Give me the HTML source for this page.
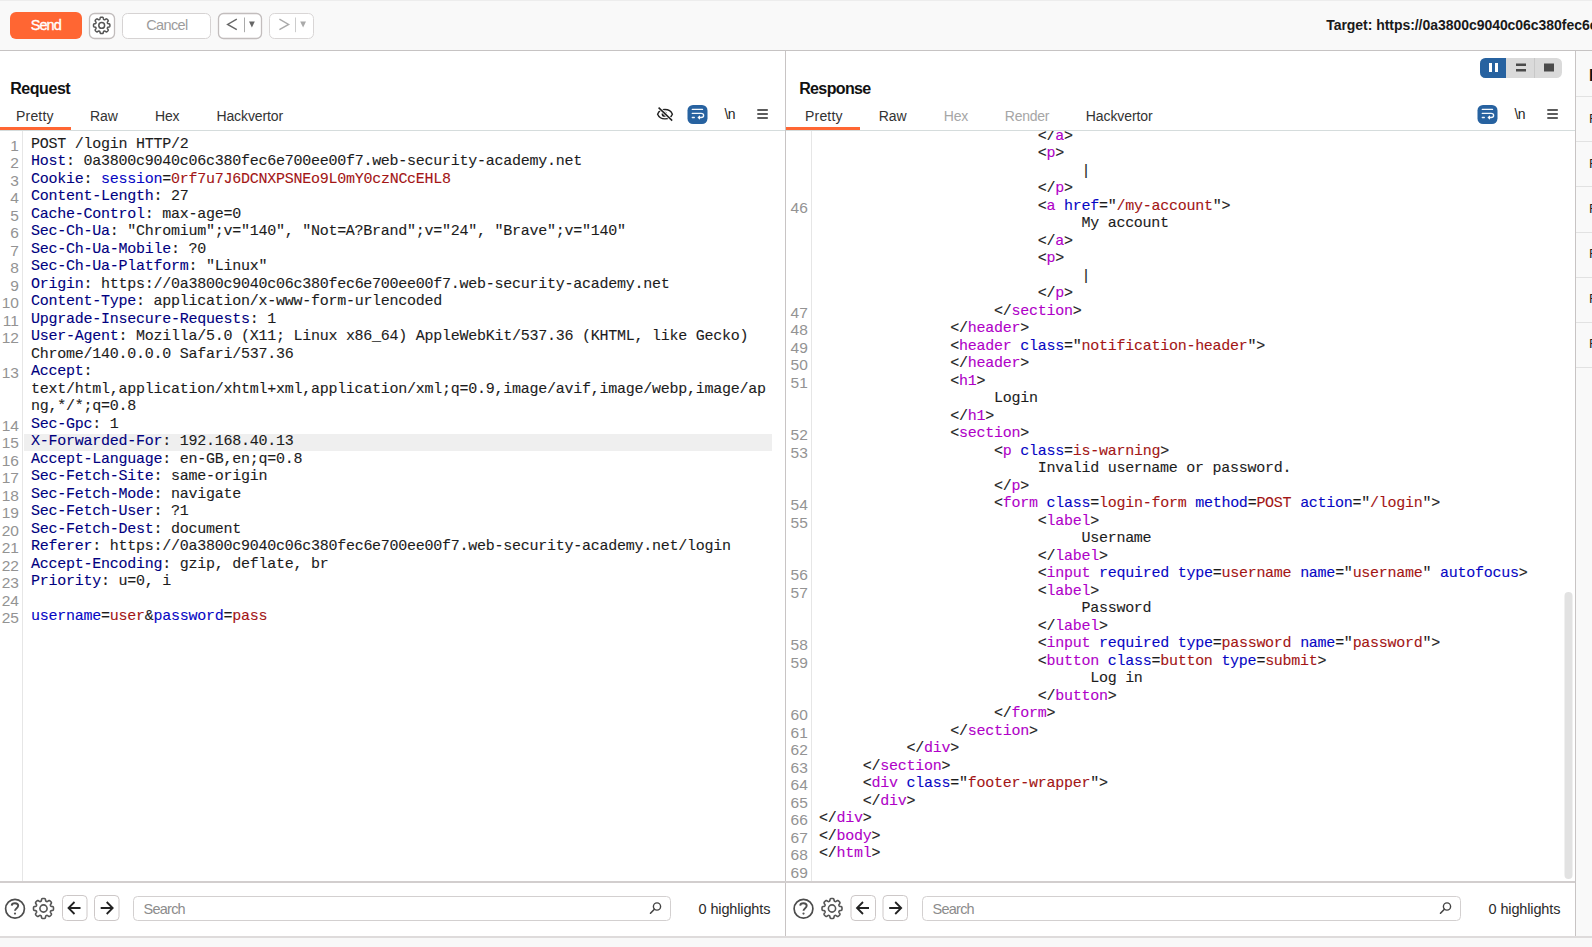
<!DOCTYPE html>
<html><head><meta charset="utf-8">
<style>
*{box-sizing:border-box;margin:0;padding:0}
html,body{width:1592px;height:947px;overflow:hidden;background:#fff;font-family:"Liberation Sans",sans-serif;color:#1a1a1a;position:relative}
.a{position:absolute}
#tb{left:0;top:0;width:1592px;height:50px;background:#f9f9f9;border-top:1px solid #ededed}
#tbline{left:0;top:50px;width:1592px;height:1px;background:#c6c3c3}
.btn{position:absolute;border:1px solid #cdc8c8;border-radius:5px;background:#fff}
#send{position:absolute;left:10px;top:12px;width:72px;height:27px;background:#ff6633;border-radius:6px;color:#fff;font-size:15px;text-align:center;line-height:27px}
.hdr{position:absolute;font-weight:bold;font-size:16px;color:#111;white-space:nowrap}
.tab{position:absolute;font-size:13.5px;color:#3a3a3a;white-space:nowrap}
.tab.dis{color:#a8a8a8}
.ul{position:absolute;height:3px;background:#ff6633}
.hl{position:absolute;height:1px;background:#d5dcdc}
.vl{position:absolute;width:1px}
.clip{position:absolute;left:0;top:0;width:1592px;height:947px}
.code{position:absolute;font-family:"Liberation Mono",monospace;font-size:15px;letter-spacing:-0.255px;line-height:17.5px;white-space:pre;color:#1c1c1c;-webkit-text-stroke:0.1px currentColor}
.ln{position:absolute;font-size:13px;color:#8a8a8a;text-align:right;line-height:17.5px}
.nl{position:absolute;font-size:14px;color:#222;letter-spacing:-0.5px}
.ph{position:absolute;font-size:13.5px;color:#8e8e8e}
.hi{position:absolute;font-size:13.5px;color:#2a2a2a;white-space:nowrap}
.n{color:#000080}.b{color:#0606c4}.r{color:#a31515}.t{color:#b000c8}
</style></head><body>
<div id="tb" class="a"></div>
<div id="tbline" class="a"></div>

<!-- request pane -->
<div class="hl" style="left:0;top:130px;width:785px"></div>
<div class="ul" style="left:0;top:127px;width:71px"></div>

<div class="clip" style="clip-path:inset(131px 807px 66px 0)">
<div class="a" style="left:24px;top:434px;width:748px;height:17px;background:#efefef"></div>
<div class="vl" style="left:22px;top:131px;height:750px;background:#e6e6e6"></div>
<svg class="a" style="left:0;top:0" width="1592" height="947"><g font-family="Liberation Sans, sans-serif" font-size="15.5" fill="#939393" text-anchor="end"><text x="18.9" y="150.60">1</text><text x="18.9" y="168.10">2</text><text x="18.9" y="185.60">3</text><text x="18.9" y="203.10">4</text><text x="18.9" y="220.60">5</text><text x="18.9" y="238.10">6</text><text x="18.9" y="255.60">7</text><text x="18.9" y="273.10">8</text><text x="18.9" y="290.60">9</text><text x="18.9" y="308.10">10</text><text x="18.9" y="325.60">11</text><text x="18.9" y="343.10">12</text><text x="18.9" y="378.10">13</text><text x="18.9" y="430.60">14</text><text x="18.9" y="448.10">15</text><text x="18.9" y="465.60">16</text><text x="18.9" y="483.10">17</text><text x="18.9" y="500.60">18</text><text x="18.9" y="518.10">19</text><text x="18.9" y="535.60">20</text><text x="18.9" y="553.10">21</text><text x="18.9" y="570.60">22</text><text x="18.9" y="588.10">23</text><text x="18.9" y="605.60">24</text><text x="18.9" y="623.10">25</text></g></svg>
<div class="code" style="left:31px;top:135.7px;width:750px">POST /login HTTP/2
<span class="n">Host</span>: 0a3800c9040c06c380fec6e700ee00f7.web-security-academy.net
<span class="n">Cookie</span>: <span class="b">session</span>=<span class="r">0rf7u7J6DCNXPSNEo9L0mY0czNCcEHL8</span>
<span class="n">Content-Length</span>: 27
<span class="n">Cache-Control</span>: max-age=0
<span class="n">Sec-Ch-Ua</span>: "Chromium";v="140", "Not=A?Brand";v="24", "Brave";v="140"
<span class="n">Sec-Ch-Ua-Mobile</span>: ?0
<span class="n">Sec-Ch-Ua-Platform</span>: "Linux"
<span class="n">Origin</span>: https://0a3800c9040c06c380fec6e700ee00f7.web-security-academy.net
<span class="n">Content-Type</span>: application/x-www-form-urlencoded
<span class="n">Upgrade-Insecure-Requests</span>: 1
<span class="n">User-Agent</span>: Mozilla/5.0 (X11; Linux x86_64) AppleWebKit/537.36 (KHTML, like Gecko)
Chrome/140.0.0.0 Safari/537.36
<span class="n">Accept</span>:
text/html,application/xhtml+xml,application/xml;q=0.9,image/avif,image/webp,image/ap
ng,*/*;q=0.8
<span class="n">Sec-Gpc</span>: 1
<span class="n">X-Forwarded-For</span>: 192.168.40.13
<span class="n">Accept-Language</span>: en-GB,en;q=0.8
<span class="n">Sec-Fetch-Site</span>: same-origin
<span class="n">Sec-Fetch-Mode</span>: navigate
<span class="n">Sec-Fetch-User</span>: ?1
<span class="n">Sec-Fetch-Dest</span>: document
<span class="n">Referer</span>: https://0a3800c9040c06c380fec6e700ee00f7.web-security-academy.net/login
<span class="n">Accept-Encoding</span>: gzip, deflate, br
<span class="n">Priority</span>: u=0, i

<span class="b">username</span>=<span class="r">user</span>&amp;<span class="b">password</span>=<span class="r">pass</span></div>
</div>

<!-- divider -->
<div class="vl" style="left:785px;top:51px;height:886px;background:#c8c4c4"></div>

<!-- response pane -->
<div class="hl" style="left:786px;top:130px;width:789px"></div>
<div class="ul" style="left:786px;top:127px;width:74px"></div>

<div class="clip" style="clip-path:inset(131px 17px 66px 786px)">
<div class="vl" style="left:811px;top:131px;height:750px;background:#e6e6e6"></div>
<svg class="a" style="left:0;top:0" width="1592" height="947"><g font-family="Liberation Sans, sans-serif" font-size="15.5" fill="#939393" text-anchor="end"><text x="807.8" y="212.90">46</text><text x="807.8" y="317.90">47</text><text x="807.8" y="335.40">48</text><text x="807.8" y="352.90">49</text><text x="807.8" y="370.40">50</text><text x="807.8" y="387.90">51</text><text x="807.8" y="440.40">52</text><text x="807.8" y="457.90">53</text><text x="807.8" y="510.40">54</text><text x="807.8" y="527.90">55</text><text x="807.8" y="580.40">56</text><text x="807.8" y="597.90">57</text><text x="807.8" y="650.40">58</text><text x="807.8" y="667.90">59</text><text x="807.8" y="720.40">60</text><text x="807.8" y="737.90">61</text><text x="807.8" y="755.40">62</text><text x="807.8" y="772.90">63</text><text x="807.8" y="790.40">64</text><text x="807.8" y="807.90">65</text><text x="807.8" y="825.40">66</text><text x="807.8" y="842.90">67</text><text x="807.8" y="860.40">68</text><text x="807.8" y="877.90">69</text></g></svg>
<div class="code" style="left:819px;top:127.9px;width:745px">                         &lt;/<span class="t">a</span>&gt;
                         &lt;<span class="t">p</span>&gt;
                              |
                         &lt;/<span class="t">p</span>&gt;
                         &lt;<span class="t">a</span> <span class="b">href</span>="<span class="r">/my-account</span>"&gt;
                              My account
                         &lt;/<span class="t">a</span>&gt;
                         &lt;<span class="t">p</span>&gt;
                              |
                         &lt;/<span class="t">p</span>&gt;
                    &lt;/<span class="t">section</span>&gt;
               &lt;/<span class="t">header</span>&gt;
               &lt;<span class="t">header</span> <span class="b">class</span>="<span class="r">notification-header</span>"&gt;
               &lt;/<span class="t">header</span>&gt;
               &lt;<span class="t">h1</span>&gt;
                    Login
               &lt;/<span class="t">h1</span>&gt;
               &lt;<span class="t">section</span>&gt;
                    &lt;<span class="t">p</span> <span class="b">class</span>=<span class="r">is-warning</span>&gt;
                         Invalid username or password.
                    &lt;/<span class="t">p</span>&gt;
                    &lt;<span class="t">form</span> <span class="b">class</span>=<span class="r">login-form</span> <span class="b">method</span>=<span class="r">POST</span> <span class="b">action</span>="<span class="r">/login</span>"&gt;
                         &lt;<span class="t">label</span>&gt;
                              Username
                         &lt;/<span class="t">label</span>&gt;
                         &lt;<span class="t">input</span> <span class="b">required</span> <span class="b">type</span>=<span class="r">username</span> <span class="b">name</span>="<span class="r">username</span>" <span class="b">autofocus</span>&gt;
                         &lt;<span class="t">label</span>&gt;
                              Password
                         &lt;/<span class="t">label</span>&gt;
                         &lt;<span class="t">input</span> <span class="b">required</span> <span class="b">type</span>=<span class="r">password</span> <span class="b">name</span>="<span class="r">password</span>"&gt;
                         &lt;<span class="t">button</span> <span class="b">class</span>=<span class="r">button</span> <span class="b">type</span>=<span class="r">submit</span>&gt;
                               Log in
                         &lt;/<span class="t">button</span>&gt;
                    &lt;/<span class="t">form</span>&gt;
               &lt;/<span class="t">section</span>&gt;
          &lt;/<span class="t">div</span>&gt;
     &lt;/<span class="t">section</span>&gt;
     &lt;<span class="t">div</span> <span class="b">class</span>="<span class="r">footer-wrapper</span>"&gt;
     &lt;/<span class="t">div</span>&gt;
&lt;/<span class="t">div</span>&gt;
&lt;/<span class="t">body</span>&gt;
&lt;/<span class="t">html</span>&gt;
</div>
</div>

<div class="vl" style="left:1575px;top:51px;height:886px;background:#c8c4c4"></div>
<div class="a" style="left:1576px;top:51px;width:16px;height:886px;background:#f9f9f9"></div>

<!-- bottom -->
<div class="a" style="left:1576px;top:96px;width:16px;height:1px;background:#e2e2e2"></div>
<div class="a" style="left:1576px;top:141px;width:16px;height:1px;background:#e2e2e2"></div>
<div class="a" style="left:1576px;top:186px;width:16px;height:1px;background:#e2e2e2"></div>
<div class="a" style="left:1576px;top:232px;width:16px;height:1px;background:#e2e2e2"></div>
<div class="a" style="left:1576px;top:277px;width:16px;height:1px;background:#e2e2e2"></div>
<div class="a" style="left:1576px;top:322px;width:16px;height:1px;background:#e2e2e2"></div>
<div class="a" style="left:1576px;top:367px;width:16px;height:1px;background:#e2e2e2"></div>
<div class="a" style="left:1589px;top:67px;font-size:16px;font-weight:bold;color:#111">I</div>
<div class="a" style="left:1589px;top:110.5px;font-size:13.5px;color:#222">R</div>
<div class="a" style="left:1589px;top:155.5px;font-size:13.5px;color:#222">R</div>
<div class="a" style="left:1589px;top:200.5px;font-size:13.5px;color:#222">R</div>
<div class="a" style="left:1589px;top:245.5px;font-size:13.5px;color:#222">R</div>
<div class="a" style="left:1589px;top:290.5px;font-size:13.5px;color:#222">R</div>
<div class="a" style="left:1589px;top:335.5px;font-size:13.5px;color:#222">R</div>
<div class="a" style="left:0;top:881px;width:1575px;height:2px;background:#d2cece"></div>
<div class="a" style="left:0;top:936px;width:1592px;height:2px;background:#dedbdb"></div>
<div class="a" style="left:0;top:938px;width:1592px;height:9px;background:#f8f8f8"></div>
<svg class="a" style="left:0;top:0" width="1592" height="947" viewBox="0 0 1592 947">
<rect x="10" y="12" width="72" height="27" rx="6" fill="#ff6633"/>
<rect x="89.5" y="13.5" width="25" height="25" rx="5" fill="#fff" stroke="#c2bdbd" stroke-width="1.3"/>
<path d="M101.70 17.20L101.91 17.20L102.13 17.21L102.34 17.23L102.55 17.27L102.76 17.32L102.96 17.43L103.14 17.63L103.28 17.98L103.37 18.46L103.44 18.91L103.53 19.21L103.65 19.40L103.78 19.52L103.93 19.60L104.07 19.67L104.23 19.73L104.39 19.77L104.56 19.78L104.78 19.73L105.06 19.58L105.43 19.32L105.83 19.04L106.18 18.89L106.44 18.87L106.66 18.94L106.85 19.04L107.02 19.17L107.18 19.31L107.34 19.45L107.50 19.60L107.65 19.76L107.79 19.92L107.93 20.08L108.06 20.25L108.16 20.44L108.23 20.66L108.21 20.92L108.06 21.27L107.78 21.67L107.52 22.04L107.37 22.32L107.32 22.54L107.33 22.71L107.37 22.87L107.43 23.03L107.50 23.17L107.58 23.32L107.70 23.45L107.89 23.57L108.19 23.66L108.64 23.73L109.12 23.82L109.47 23.96L109.67 24.14L109.78 24.34L109.83 24.55L109.87 24.76L109.89 24.97L109.90 25.19L109.90 25.40L109.90 25.61L109.89 25.83L109.87 26.04L109.83 26.25L109.78 26.46L109.67 26.66L109.47 26.84L109.12 26.98L108.64 27.07L108.19 27.14L107.89 27.23L107.70 27.35L107.58 27.48L107.50 27.63L107.43 27.77L107.37 27.93L107.33 28.09L107.32 28.26L107.37 28.48L107.52 28.76L107.78 29.13L108.06 29.53L108.21 29.88L108.23 30.14L108.16 30.36L108.06 30.55L107.93 30.72L107.79 30.88L107.65 31.04L107.50 31.20L107.34 31.35L107.18 31.49L107.02 31.63L106.85 31.76L106.66 31.86L106.44 31.93L106.18 31.91L105.83 31.76L105.43 31.48L105.06 31.22L104.78 31.07L104.56 31.02L104.39 31.03L104.23 31.07L104.07 31.13L103.93 31.20L103.78 31.28L103.65 31.40L103.53 31.59L103.44 31.89L103.37 32.34L103.28 32.82L103.14 33.17L102.96 33.37L102.76 33.48L102.55 33.53L102.34 33.57L102.13 33.59L101.91 33.60L101.70 33.60L101.49 33.60L101.27 33.59L101.06 33.57L100.85 33.53L100.64 33.48L100.44 33.37L100.26 33.17L100.12 32.82L100.03 32.34L99.96 31.89L99.87 31.59L99.75 31.40L99.62 31.28L99.47 31.20L99.33 31.13L99.17 31.07L99.01 31.03L98.84 31.02L98.62 31.07L98.34 31.22L97.97 31.48L97.57 31.76L97.22 31.91L96.96 31.93L96.74 31.86L96.55 31.76L96.38 31.63L96.22 31.49L96.06 31.35L95.90 31.20L95.75 31.04L95.61 30.88L95.47 30.72L95.34 30.55L95.24 30.36L95.17 30.14L95.19 29.88L95.34 29.53L95.62 29.13L95.88 28.76L96.03 28.48L96.08 28.26L96.07 28.09L96.03 27.93L95.97 27.77L95.90 27.63L95.82 27.48L95.70 27.35L95.51 27.23L95.21 27.14L94.76 27.07L94.28 26.98L93.93 26.84L93.73 26.66L93.62 26.46L93.57 26.25L93.53 26.04L93.51 25.83L93.50 25.61L93.50 25.40L93.50 25.19L93.51 24.97L93.53 24.76L93.57 24.55L93.62 24.34L93.73 24.14L93.93 23.96L94.28 23.82L94.76 23.73L95.21 23.66L95.51 23.57L95.70 23.45L95.82 23.32L95.90 23.17L95.97 23.03L96.03 22.87L96.07 22.71L96.08 22.54L96.03 22.32L95.88 22.04L95.62 21.67L95.34 21.27L95.19 20.92L95.17 20.66L95.24 20.44L95.34 20.25L95.47 20.08L95.61 19.92L95.75 19.76L95.90 19.60L96.06 19.45L96.22 19.31L96.38 19.17L96.55 19.04L96.74 18.94L96.96 18.87L97.22 18.89L97.57 19.04L97.97 19.32L98.34 19.58L98.62 19.73L98.84 19.78L99.01 19.77L99.17 19.73L99.33 19.67L99.47 19.60L99.62 19.52L99.75 19.40L99.87 19.21L99.96 18.91L100.03 18.46L100.12 17.98L100.26 17.63L100.44 17.43L100.64 17.32L100.85 17.27L101.06 17.23L101.27 17.21L101.49 17.20Z" fill="none" stroke="#555" stroke-width="1.5" stroke-linejoin="round"/>
<circle cx="101.7" cy="25.4" r="2.9" fill="none" stroke="#555" stroke-width="1.5"/>
<rect x="122.5" y="13.5" width="88" height="25" rx="5" fill="#fff" stroke="#d6d3d3"/>
<rect x="218.5" y="13.5" width="43" height="25" rx="5" fill="#fff" stroke="#c2bdbd" stroke-width="1.3"/>
<path d="M236.8 19.2L227.6 24.4L236.8 29.6" fill="none" stroke="#666" stroke-width="1.4"/>
<path d="M244.5 17.5V32.2" stroke="#aaa" stroke-width="1"/>
<path d="M249 21.6H254.8L251.9 27.5Z" fill="#666"/>
<rect x="269.5" y="13.5" width="44" height="25" rx="5" fill="#fff" stroke="#d9d6d6"/>
<path d="M279.4 19.2L288.6 24.4L279.4 29.6" fill="none" stroke="#aaa" stroke-width="1.4"/>
<path d="M295.5 17.5V32.2" stroke="#ccc" stroke-width="1"/>
<path d="M300.2 21.6H306L303.1 27.5Z" fill="#aaa"/>
<g fill="none" stroke="#222" stroke-width="1.4"><path d="M657.6 114.2C660.2 108 669.8 108 672.4 114.2C669.8 120.4 660.2 120.4 657.6 114.2Z"/><circle cx="664.3" cy="114.2" r="2.6" fill="#222" stroke="none"/><path d="M658.6 107.6L672.2 120.6" stroke="#fff" stroke-width="3.2"/><path d="M658.6 107.6L672.2 120.6" stroke-width="1.5"/></g>
<rect x="687.5" y="105" width="20" height="19" rx="5.5" fill="#2762a0"/><g stroke="#f4f8fc" stroke-width="1.35" fill="none" stroke-linecap="round"><path d="M692.3 109.4H702.5"/><path d="M692.3 113.4H701.0C704.5 113.4 704.5 117.5 701.0 117.5H698.5"/><path d="M692.3 117.5H694.3"/></g><path d="M700.0 115.2L697.5 117.5L700.0 119.8Z" fill="#fff"/>
<rect x="1477.5" y="105" width="20" height="19" rx="5.5" fill="#2762a0"/><g stroke="#f4f8fc" stroke-width="1.35" fill="none" stroke-linecap="round"><path d="M1482.3 109.4H1492.5"/><path d="M1482.3 113.4H1491.0C1494.5 113.4 1494.5 117.5 1491.0 117.5H1488.5"/><path d="M1482.3 117.5H1484.3"/></g><path d="M1490.0 115.2L1487.5 117.5L1490.0 119.8Z" fill="#fff"/>
<rect x="757.3" y="109" width="10.5" height="2" fill="#5c5c5c"/><rect x="757.3" y="113" width="10.5" height="2" fill="#5c5c5c"/><rect x="757.3" y="117" width="10.5" height="2" fill="#5c5c5c"/>
<rect x="1547.3" y="109" width="10.5" height="2" fill="#5c5c5c"/><rect x="1547.3" y="113" width="10.5" height="2" fill="#5c5c5c"/><rect x="1547.3" y="117" width="10.5" height="2" fill="#5c5c5c"/>
<rect x="1480" y="58" width="82" height="20" rx="5.5" fill="#dadada"/>
<path d="M1485.5 58H1506V78H1485.5A5.5 5.5 0 0 1 1480 72.5V63.5A5.5 5.5 0 0 1 1485.5 58Z" fill="#2762a0"/>
<path d="M1534.5 58V78" stroke="#c8c8c8" stroke-width="1"/>
<rect x="1489" y="63" width="3" height="9" fill="#fff"/><rect x="1495" y="63" width="3" height="9" fill="#fff"/>
<rect x="1516" y="63.5" width="10" height="2.5" fill="#4a4a4a"/><rect x="1516" y="69" width="10" height="2.5" fill="#4a4a4a"/>
<rect x="1544" y="63.5" width="10" height="8" fill="#4a4a4a"/>
<circle cx="15" cy="908.7" r="9.4" fill="none" stroke="#4d4d4d" stroke-width="1.7"/><path d="M11.7 905.6C11.9 902.4 18.2 902.4 18.2 905.8C18.2 908.2 15 908.2 15 910.8" fill="none" stroke="#4d4d4d" stroke-width="1.9"/><circle cx="15" cy="913.6" r="1.1" fill="#555"/><path d="M43.50 898.50L43.76 898.50L44.02 898.52L44.28 898.54L44.54 898.58L44.80 898.65L45.04 898.77L45.26 899.02L45.43 899.44L45.54 900.02L45.63 900.55L45.74 900.92L45.89 901.15L46.05 901.29L46.23 901.39L46.41 901.48L46.60 901.55L46.79 901.60L47.01 901.61L47.27 901.55L47.61 901.37L48.06 901.06L48.54 900.73L48.96 900.55L49.29 900.53L49.55 900.62L49.78 900.75L49.99 900.90L50.19 901.07L50.38 901.25L50.57 901.43L50.75 901.62L50.93 901.81L51.10 902.01L51.25 902.22L51.38 902.45L51.47 902.71L51.45 903.04L51.27 903.46L50.94 903.94L50.63 904.39L50.45 904.73L50.39 904.99L50.40 905.21L50.45 905.40L50.52 905.59L50.61 905.77L50.71 905.95L50.85 906.11L51.08 906.26L51.45 906.37L51.98 906.46L52.56 906.57L52.98 906.74L53.23 906.96L53.35 907.20L53.42 907.46L53.46 907.72L53.48 907.98L53.50 908.24L53.50 908.50L53.50 908.76L53.48 909.02L53.46 909.28L53.42 909.54L53.35 909.80L53.23 910.04L52.98 910.26L52.56 910.43L51.98 910.54L51.45 910.63L51.08 910.74L50.85 910.89L50.71 911.05L50.61 911.23L50.52 911.41L50.45 911.60L50.40 911.79L50.39 912.01L50.45 912.27L50.63 912.61L50.94 913.06L51.27 913.54L51.45 913.96L51.47 914.29L51.38 914.55L51.25 914.78L51.10 914.99L50.93 915.19L50.75 915.38L50.57 915.57L50.38 915.75L50.19 915.93L49.99 916.10L49.78 916.25L49.55 916.38L49.29 916.47L48.96 916.45L48.54 916.27L48.06 915.94L47.61 915.63L47.27 915.45L47.01 915.39L46.79 915.40L46.60 915.45L46.41 915.52L46.23 915.61L46.05 915.71L45.89 915.85L45.74 916.08L45.63 916.45L45.54 916.98L45.43 917.56L45.26 917.98L45.04 918.23L44.80 918.35L44.54 918.42L44.28 918.46L44.02 918.48L43.76 918.50L43.50 918.50L43.24 918.50L42.98 918.48L42.72 918.46L42.46 918.42L42.20 918.35L41.96 918.23L41.74 917.98L41.57 917.56L41.46 916.98L41.37 916.45L41.26 916.08L41.11 915.85L40.95 915.71L40.77 915.61L40.59 915.52L40.40 915.45L40.21 915.40L39.99 915.39L39.73 915.45L39.39 915.63L38.94 915.94L38.46 916.27L38.04 916.45L37.71 916.47L37.45 916.38L37.22 916.25L37.01 916.10L36.81 915.93L36.62 915.75L36.43 915.57L36.25 915.38L36.07 915.19L35.90 914.99L35.75 914.78L35.62 914.55L35.53 914.29L35.55 913.96L35.73 913.54L36.06 913.06L36.37 912.61L36.55 912.27L36.61 912.01L36.60 911.79L36.55 911.60L36.48 911.41L36.39 911.23L36.29 911.05L36.15 910.89L35.92 910.74L35.55 910.63L35.02 910.54L34.44 910.43L34.02 910.26L33.77 910.04L33.65 909.80L33.58 909.54L33.54 909.28L33.52 909.02L33.50 908.76L33.50 908.50L33.50 908.24L33.52 907.98L33.54 907.72L33.58 907.46L33.65 907.20L33.77 906.96L34.02 906.74L34.44 906.57L35.02 906.46L35.55 906.37L35.92 906.26L36.15 906.11L36.29 905.95L36.39 905.77L36.48 905.59L36.55 905.40L36.60 905.21L36.61 904.99L36.55 904.73L36.37 904.39L36.06 903.94L35.73 903.46L35.55 903.04L35.53 902.71L35.62 902.45L35.75 902.22L35.90 902.01L36.07 901.81L36.25 901.62L36.43 901.43L36.62 901.25L36.81 901.07L37.01 900.90L37.22 900.75L37.45 900.62L37.71 900.53L38.04 900.55L38.46 900.73L38.94 901.06L39.39 901.37L39.73 901.55L39.99 901.61L40.21 901.60L40.40 901.55L40.59 901.48L40.77 901.39L40.95 901.29L41.11 901.15L41.26 900.92L41.37 900.55L41.46 900.02L41.57 899.44L41.74 899.02L41.96 898.77L42.20 898.65L42.46 898.58L42.72 898.54L42.98 898.52L43.24 898.50Z" fill="none" stroke="#555" stroke-width="1.6" stroke-linejoin="round"/><circle cx="43.5" cy="908.5" r="3.6" fill="none" stroke="#555" stroke-width="1.6"/><rect x="62.5" y="895.5" width="24.5" height="25" rx="4" fill="#fff" stroke="#cdc8c8"/><rect x="94.5" y="895.5" width="24.5" height="25" rx="4" fill="#fff" stroke="#cdc8c8"/><path d="M80.5 908H68.5M74.5 902L68.5 908L74.5 914" fill="none" stroke="#222" stroke-width="1.8"/><path d="M100.7 908H112.7M106.7 902L112.7 908L106.7 914" fill="none" stroke="#222" stroke-width="1.8"/><rect x="133.5" y="896.5" width="537" height="24" rx="4" fill="#fff" stroke="#d3d0d0"/><circle cx="657" cy="906.5" r="3.6" fill="none" stroke="#444" stroke-width="1.4"/><path d="M654.4 909.2L650.5 913.2" stroke="#444" stroke-width="1.6" stroke-linecap="round"/>
<circle cx="803.5" cy="908.7" r="9.4" fill="none" stroke="#4d4d4d" stroke-width="1.7"/><path d="M800.2 905.6C800.4 902.4 806.7 902.4 806.7 905.8C806.7 908.2 803.5 908.2 803.5 910.8" fill="none" stroke="#4d4d4d" stroke-width="1.9"/><circle cx="803.5" cy="913.6" r="1.1" fill="#555"/><path d="M832.00 898.50L832.26 898.50L832.52 898.52L832.78 898.54L833.04 898.58L833.30 898.65L833.54 898.77L833.76 899.02L833.93 899.44L834.04 900.02L834.13 900.55L834.24 900.92L834.39 901.15L834.55 901.29L834.73 901.39L834.91 901.48L835.10 901.55L835.29 901.60L835.51 901.61L835.77 901.55L836.11 901.37L836.56 901.06L837.04 900.73L837.46 900.55L837.79 900.53L838.05 900.62L838.28 900.75L838.49 900.90L838.69 901.07L838.88 901.25L839.07 901.43L839.25 901.62L839.43 901.81L839.60 902.01L839.75 902.22L839.88 902.45L839.97 902.71L839.95 903.04L839.77 903.46L839.44 903.94L839.13 904.39L838.95 904.73L838.89 904.99L838.90 905.21L838.95 905.40L839.02 905.59L839.11 905.77L839.21 905.95L839.35 906.11L839.58 906.26L839.95 906.37L840.48 906.46L841.06 906.57L841.48 906.74L841.73 906.96L841.85 907.20L841.92 907.46L841.96 907.72L841.98 907.98L842.00 908.24L842.00 908.50L842.00 908.76L841.98 909.02L841.96 909.28L841.92 909.54L841.85 909.80L841.73 910.04L841.48 910.26L841.06 910.43L840.48 910.54L839.95 910.63L839.58 910.74L839.35 910.89L839.21 911.05L839.11 911.23L839.02 911.41L838.95 911.60L838.90 911.79L838.89 912.01L838.95 912.27L839.13 912.61L839.44 913.06L839.77 913.54L839.95 913.96L839.97 914.29L839.88 914.55L839.75 914.78L839.60 914.99L839.43 915.19L839.25 915.38L839.07 915.57L838.88 915.75L838.69 915.93L838.49 916.10L838.28 916.25L838.05 916.38L837.79 916.47L837.46 916.45L837.04 916.27L836.56 915.94L836.11 915.63L835.77 915.45L835.51 915.39L835.29 915.40L835.10 915.45L834.91 915.52L834.73 915.61L834.55 915.71L834.39 915.85L834.24 916.08L834.13 916.45L834.04 916.98L833.93 917.56L833.76 917.98L833.54 918.23L833.30 918.35L833.04 918.42L832.78 918.46L832.52 918.48L832.26 918.50L832.00 918.50L831.74 918.50L831.48 918.48L831.22 918.46L830.96 918.42L830.70 918.35L830.46 918.23L830.24 917.98L830.07 917.56L829.96 916.98L829.87 916.45L829.76 916.08L829.61 915.85L829.45 915.71L829.27 915.61L829.09 915.52L828.90 915.45L828.71 915.40L828.49 915.39L828.23 915.45L827.89 915.63L827.44 915.94L826.96 916.27L826.54 916.45L826.21 916.47L825.95 916.38L825.72 916.25L825.51 916.10L825.31 915.93L825.12 915.75L824.93 915.57L824.75 915.38L824.57 915.19L824.40 914.99L824.25 914.78L824.12 914.55L824.03 914.29L824.05 913.96L824.23 913.54L824.56 913.06L824.87 912.61L825.05 912.27L825.11 912.01L825.10 911.79L825.05 911.60L824.98 911.41L824.89 911.23L824.79 911.05L824.65 910.89L824.42 910.74L824.05 910.63L823.52 910.54L822.94 910.43L822.52 910.26L822.27 910.04L822.15 909.80L822.08 909.54L822.04 909.28L822.02 909.02L822.00 908.76L822.00 908.50L822.00 908.24L822.02 907.98L822.04 907.72L822.08 907.46L822.15 907.20L822.27 906.96L822.52 906.74L822.94 906.57L823.52 906.46L824.05 906.37L824.42 906.26L824.65 906.11L824.79 905.95L824.89 905.77L824.98 905.59L825.05 905.40L825.10 905.21L825.11 904.99L825.05 904.73L824.87 904.39L824.56 903.94L824.23 903.46L824.05 903.04L824.03 902.71L824.12 902.45L824.25 902.22L824.40 902.01L824.57 901.81L824.75 901.62L824.93 901.43L825.12 901.25L825.31 901.07L825.51 900.90L825.72 900.75L825.95 900.62L826.21 900.53L826.54 900.55L826.96 900.73L827.44 901.06L827.89 901.37L828.23 901.55L828.49 901.61L828.71 901.60L828.90 901.55L829.09 901.48L829.27 901.39L829.45 901.29L829.61 901.15L829.76 900.92L829.87 900.55L829.96 900.02L830.07 899.44L830.24 899.02L830.46 898.77L830.70 898.65L830.96 898.58L831.22 898.54L831.48 898.52L831.74 898.50Z" fill="none" stroke="#555" stroke-width="1.6" stroke-linejoin="round"/><circle cx="832.0" cy="908.5" r="3.6" fill="none" stroke="#555" stroke-width="1.6"/><rect x="851.0" y="895.5" width="24.5" height="25" rx="4" fill="#fff" stroke="#cdc8c8"/><rect x="883.0" y="895.5" width="24.5" height="25" rx="4" fill="#fff" stroke="#cdc8c8"/><path d="M869.0 908H857.0M863.0 902L857.0 908L863.0 914" fill="none" stroke="#222" stroke-width="1.8"/><path d="M889.2 908H901.2M895.2 902L901.2 908L895.2 914" fill="none" stroke="#222" stroke-width="1.8"/><rect x="922.5" y="896.5" width="538" height="24" rx="4" fill="#fff" stroke="#d3d0d0"/><circle cx="1447" cy="906.5" r="3.6" fill="none" stroke="#444" stroke-width="1.4"/><path d="M1444.4 909.2L1440.5 913.2" stroke="#444" stroke-width="1.6" stroke-linecap="round"/>
<rect x="1564.5" y="592" width="8" height="287" rx="4" fill="#e2e2e2"/>
<g font-family="Liberation Sans, sans-serif">
<text x="30.8" y="29.8" font-size="14.5" font-weight="normal" fill="#fff" textLength="31" lengthAdjust="spacing" stroke="#fff" stroke-width="0.35">Send</text>
<text x="146.2" y="29.5" font-size="14.5" font-weight="normal" fill="#9c9c9c" textLength="42" lengthAdjust="spacing">Cancel</text>
<text x="10.2" y="93.5" font-size="16" font-weight="bold" fill="#111" textLength="60.5" lengthAdjust="spacing">Request</text>
<text x="799.2" y="93.5" font-size="16" font-weight="bold" fill="#111" textLength="72" lengthAdjust="spacing">Response</text>
<text x="16.0" y="120.6" font-size="14" font-weight="normal" fill="#333" textLength="37.5" lengthAdjust="spacing">Pretty</text>
<text x="90.0" y="120.6" font-size="14" font-weight="normal" fill="#333" textLength="27.8" lengthAdjust="spacing">Raw</text>
<text x="155.0" y="120.6" font-size="14" font-weight="normal" fill="#333" textLength="24.5" lengthAdjust="spacing">Hex</text>
<text x="216.4" y="120.6" font-size="14" font-weight="normal" fill="#333" textLength="66.8" lengthAdjust="spacing">Hackvertor</text>
<text x="805.0" y="120.6" font-size="14" font-weight="normal" fill="#333" textLength="37.5" lengthAdjust="spacing">Pretty</text>
<text x="878.8" y="120.6" font-size="14" font-weight="normal" fill="#333" textLength="27.8" lengthAdjust="spacing">Raw</text>
<text x="943.8" y="120.6" font-size="14" font-weight="normal" fill="#a6a6a6" textLength="24.5" lengthAdjust="spacing">Hex</text>
<text x="1004.8" y="120.6" font-size="14" font-weight="normal" fill="#a6a6a6" textLength="44.6" lengthAdjust="spacing">Render</text>
<text x="1085.8" y="120.6" font-size="14" font-weight="normal" fill="#333" textLength="66.8" lengthAdjust="spacing">Hackvertor</text>
<text x="1326.2" y="29.6" font-size="14" font-weight="bold" fill="#1a1a1a" textLength="310" lengthAdjust="spacing">Target: https://0a3800c9040c06c380fec6e700ee</text>
<text x="143.5" y="913.6" font-size="14.5" font-weight="normal" fill="#8c8c8c" textLength="42.2" lengthAdjust="spacing">Search</text>
<text x="932.5" y="913.6" font-size="14.5" font-weight="normal" fill="#8c8c8c" textLength="42.2" lengthAdjust="spacing">Search</text>
<text x="698.6" y="913.5" font-size="14.5" font-weight="normal" fill="#2b2b2b" textLength="71.8" lengthAdjust="spacing">0 highlights</text>
<text x="1488.6" y="913.5" font-size="14.5" font-weight="normal" fill="#2b2b2b" textLength="71.8" lengthAdjust="spacing">0 highlights</text>
<text x="724.5" y="118.5" font-size="14" font-weight="normal" fill="#222" textLength="11" lengthAdjust="spacing">\n</text>
<text x="1514.5" y="118.5" font-size="14" font-weight="normal" fill="#222" textLength="11" lengthAdjust="spacing">\n</text>
</g>
</svg>
</body></html>
